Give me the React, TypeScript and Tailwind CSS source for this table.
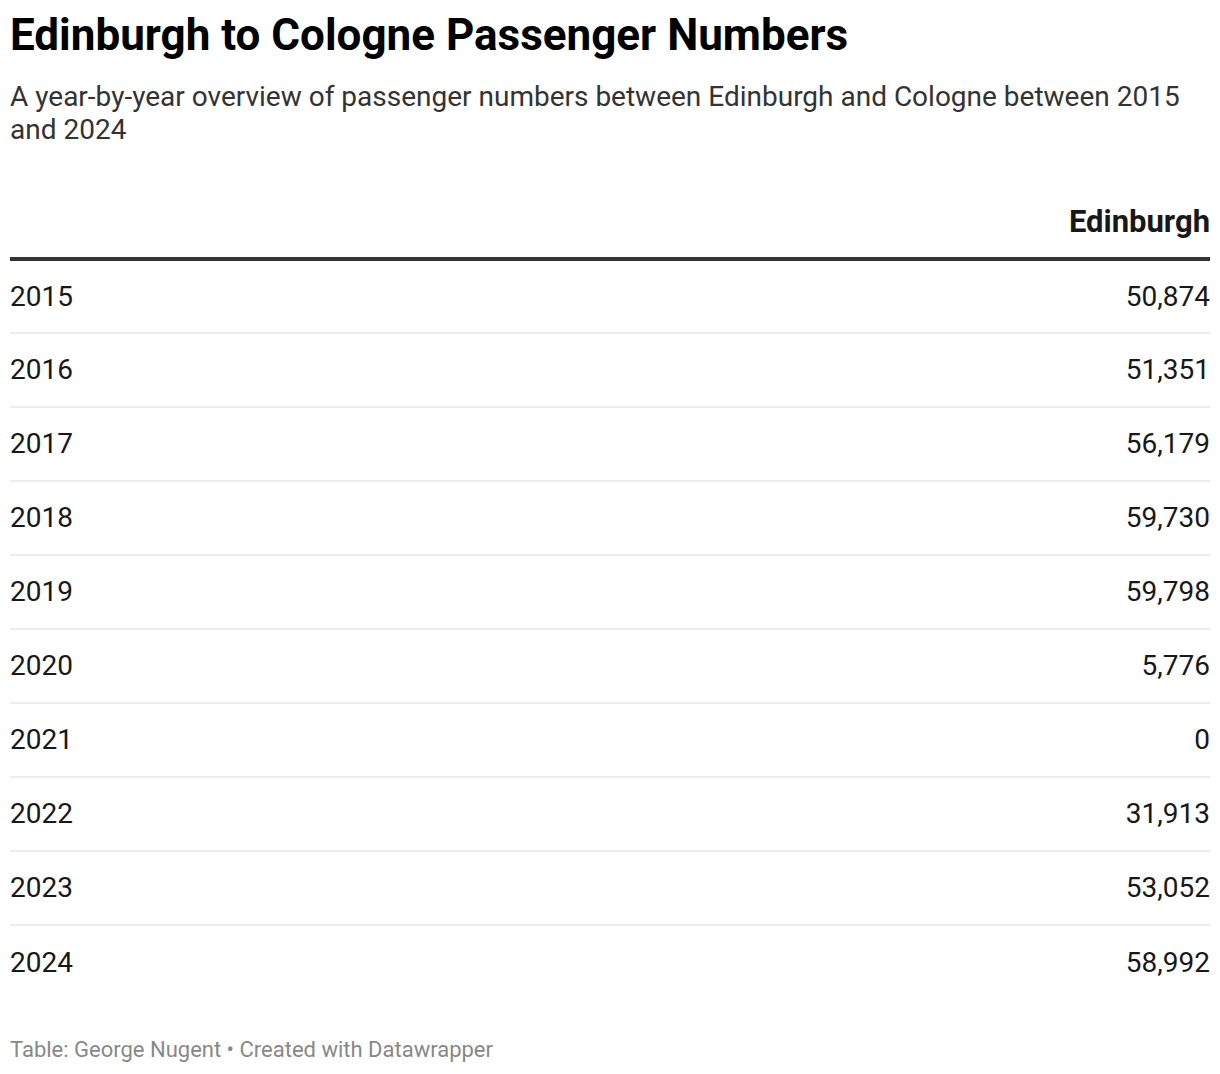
import React from "react";

const rows = [
  { year: "2015", value: "50,874" },
  { year: "2016", value: "51,351" },
  { year: "2017", value: "56,179" },
  { year: "2018", value: "59,730" },
  { year: "2019", value: "59,798" },
  { year: "2020", value: "5,776" },
  { year: "2021", value: "0" },
  { year: "2022", value: "31,913" },
  { year: "2023", value: "53,052" },
  { year: "2024", value: "58,992" },
];

export default function App() {
  return (
    <div className="bg-white px-[10px] pt-[10px] text-[#181818] font-['Roboto',sans-serif]">
      <h1 className="text-[44px] font-bold leading-[50px] text-black">Edinburgh to Cologne Passenger Numbers</h1>
      <p className="mt-[20px] text-[28px] leading-[33px] text-[#333]">
        A year-by-year overview of passenger numbers between Edinburgh and Cologne between 2015 and 2024
      </p>

      <table className="mt-[58px] w-full border-collapse">
        <thead>
          <tr className="border-b-[4px] border-[#333]">
            <th className="w-1/2"></th>
            <th className="pb-[17px] text-right text-[31px] font-bold leading-[36px]">Edinburgh</th>
          </tr>
        </thead>
        <tbody>
          {rows.map((r, i) => (
            <tr key={r.year} className={i < rows.length - 1 ? "border-b-2 border-[#ececec]" : ""}>
              <td className="h-[74px] text-left text-[28px]">{r.year}</td>
              <td className="h-[74px] text-right text-[28px]">{r.value}</td>
            </tr>
          ))}
        </tbody>
      </table>

      <div className="mt-[37px] pb-[10px] text-[22px] leading-[28px] text-[#888]">
        Table: George Nugent • Created with Datawrapper
      </div>
    </div>
  );
}
